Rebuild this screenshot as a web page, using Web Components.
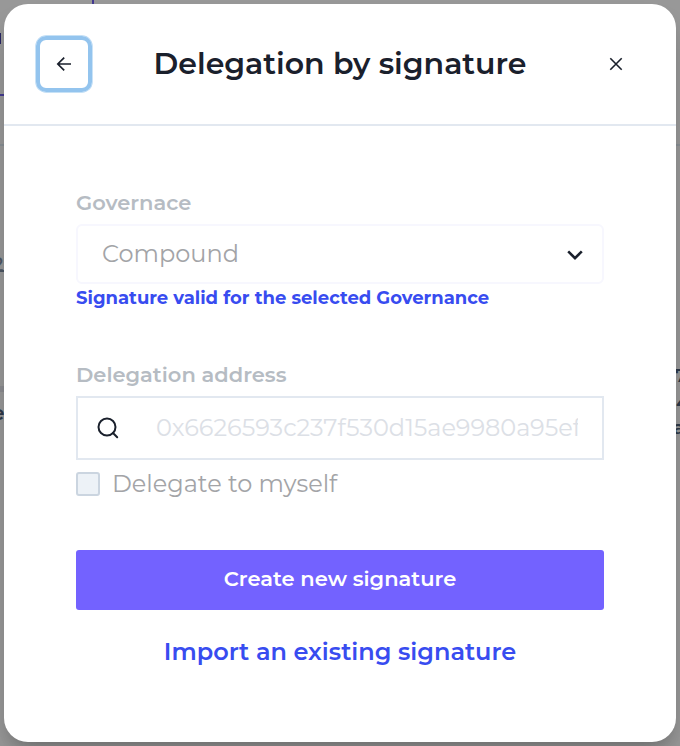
<!DOCTYPE html>
<html lang="en">
<head>
<meta charset="utf-8">
<title>Delegation by signature</title>
<style>
html, body { margin: 0; height: 100%; overflow: hidden; }
body { font-family: Montserrat, Inter, "Open Sans", sans-serif; color: #1a202c; background: #999; }
</style>
</head>
<body>
<delegation-page></delegation-page>
<script>
const define = (name, html) => customElements.define(name, class extends HTMLElement {
  constructor() {
    super();
    const t = document.createElement('template');
    t.innerHTML = html;
    this.attachShadow({ mode: 'open' }).append(t.content.cloneNode(true));
  }
});

define('page-backdrop', `
<style>
:host { position: absolute; inset: 0; overflow: hidden; background: #989898; }
i, b { position: absolute; display: block; }
b { font-weight: 600; line-height: 24px; color: #2d3848; }
</style>
<i style="left:0;top:0;width:92px;height:94px;border:solid #443a91;border-width:0 2px 2px 0"></i>
<i style="left:0;top:144px;width:680px;height:2px;background:#888f94"></i>
<i style="left:0;top:33px;width:1px;height:11px;background:#292663"></i>
<i style="left:0;top:270px;width:5px;height:2px;background:#4d5764"></i>
<i style="left:0;top:386px;width:5px;height:6px;background:#8b8c90"></i>
<b style="left:-8px;top:252px;font-size:20px;font-weight:500;color:#4d5764">2</b>
<b style="left:-8px;top:401px;font-size:20px">e</b>
<b style="left:675px;top:364px;font-size:19px">7</b>
<b style="left:676px;top:391px;font-size:19px">4</b>
<b style="left:673px;top:416px;font-size:19px">a</b>
`);

define('modal-dialog', `
<style>
:host { position: absolute; inset: 4px; display: flex; flex-direction: column; background: #fff; border-radius: 24px; box-shadow: 0 20px 30px -6px rgba(0,0,0,.2), 0 8px 12px -4px rgba(0,0,0,.1); }
header { display: flex; align-items: center; justify-content: space-between; height: 120px; padding: 0 32px; border-bottom: 2px solid #e2e8f0; }
main { display: flex; flex-direction: column; padding: 63px 72px 0; }
</style>
<header><slot name="header"></slot></header>
<main><slot></slot></main>
`);

define('dialog-title', `
<style>
:host { display: block; font-size: 30px; font-weight: 600; line-height: 40px; white-space: nowrap; }
</style><slot></slot>`);

define('icon-button', `
<style>
:host { display: block; }
button { display: flex; align-items: center; justify-content: center; box-sizing: border-box; width: 56px; height: 56px; padding: 0; border: 0; border-radius: 10px; background: none; color: inherit; }
:host([focused]) button { border: 4px solid #93c4ee; box-shadow: 0 0 0 .7px #b4d7f4; }
</style><button><slot></slot></button>`);

define('field-label', `
<style>
:host { display: block; height: 31px; line-height: 28px; font-size: 21px; font-weight: 600; color: #b6bcc3; white-space: nowrap; }
</style><slot></slot>`);

define('select-field', `
<style>
:host { display: flex; align-items: center; justify-content: space-between; box-sizing: border-box; height: 60px; margin-top: 4px; padding: 0 17px 0 24px; border: 2px solid #f7f7fe; border-radius: 6px; color: #a3a4a7; font-size: 24px; font-weight: 400; }
span { padding-bottom: 2px; }
svg { color: #1a202c; display: block; }
</style><span><slot></slot></span>
<svg width="20" height="20" viewBox="0 0 20 20" fill="none" stroke="currentColor" stroke-width="2.6"><path d="M3.2 7.4 10 14.1 16.8 7.4"/></svg>`);

define('field-hint', `
<style>
:host { display: block; height: 77px; line-height: 28px; font-size: 18px; font-weight: 700; color: #384cf0; white-space: nowrap; }
</style><slot></slot>`);

define('address-field', `
<style>
:host { display: flex; align-items: center; box-sizing: border-box; height: 64px; margin-top: 4px; padding: 0 24px 0 18px; border: 2px solid #e2e8f0; }
svg { flex: none; margin-right: 36px; }
span { flex: 1; overflow: hidden; white-space: nowrap; color: #dce0e6; font-size: 24px; font-weight: 400; line-height: 32px; }
</style>
<svg width="24" height="24" viewBox="0 0 24 24" fill="none" stroke="#1a202c" stroke-width="2"><circle cx="11" cy="11" r="8.5"/><path d="m17 17 4.2 4.2" stroke-linecap="round"/></svg>
<span><slot></slot></span>`);

define('check-box', `
<style>
:host { display: flex; align-items: center; gap: 12px; height: 24px; margin-top: 12px; color: #a3a4a7; font-size: 24px; font-weight: 400; line-height: 24px; white-space: nowrap; }
i { box-sizing: border-box; width: 24px; height: 24px; border: 2px solid #cbd5e0; border-radius: 3px; background: #edf2f7; }
</style><i></i><slot></slot>`);

define('action-button', `
<style>
:host { display: block; margin-top: 54px; }
button { display: block; width: 100%; height: 60px; padding: 0 0 2px; border: 0; border-radius: 3px; background: #7362ff; color: #fff; font: 600 21px/28px Montserrat, Inter, sans-serif; }
</style><button><slot></slot></button>`);

define('text-link', `
<style>
:host { display: block; margin-top: 24px; text-align: center; color: #384cf0; font-size: 24px; font-weight: 600; line-height: 36px; white-space: nowrap; }
</style><slot></slot>`);

define('delegation-page', `
<style>
:host { position: relative; display: block; width: 680px; height: 746px; overflow: hidden; }
svg { display: block; }
</style>
<page-backdrop></page-backdrop>
<modal-dialog>
  <icon-button slot="header" focused><svg width="16" height="16" viewBox="0 0 16 16" fill="none" stroke="#1a202c" stroke-width="1.7"><path d="M15 8H2M8.2 1.6 1.8 8l6.4 6.4"/></svg></icon-button>
  <dialog-title slot="header">Delegation by signature</dialog-title>
  <icon-button slot="header"><svg width="14" height="14" viewBox="0 0 14 14" fill="none" stroke="#1a202c" stroke-width="1.6"><path d="m1.3 1.3 11.4 11.4m0-11.4L1.3 12.7"/></svg></icon-button>
  <field-label>Governace</field-label>
  <select-field>Compound</select-field>
  <field-hint>Signature valid for the selected Governance</field-hint>
  <field-label>Delegation address</field-label>
  <address-field>0x6626593c237f530d15ae9980a95ef</address-field>
  <check-box>Delegate to myself</check-box>
  <action-button>Create new signature</action-button>
  <text-link>Import an existing signature</text-link>
</modal-dialog>
`);
</script>
</body>
</html>
